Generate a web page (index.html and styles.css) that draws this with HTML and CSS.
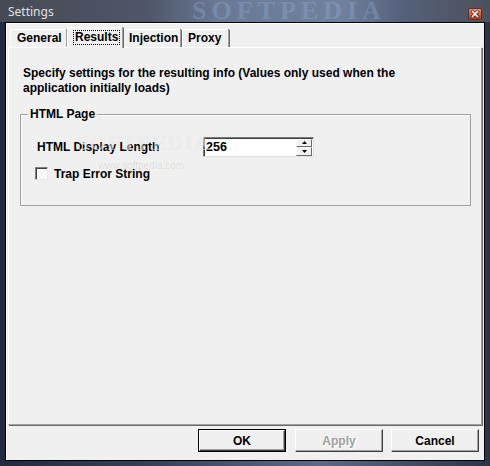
FILE: index.html
```html
<!DOCTYPE html>
<html>
<head>
<meta charset="utf-8">
<link rel="stylesheet" href="styles.css">
</head>
<body>
<div class="window">
  <div class="titlebar">
    <span class="title">Settings</span>
    <span class="wm-title">SOFTPEDIA</span>
    <span class="close">
      <svg width="14" height="12" viewBox="0 0 14 12">
        <path d="M4.5 3.5 L9.5 8.5 M9.5 3.5 L4.5 8.5" stroke="#5a1a10" stroke-width="3" stroke-linecap="square"/>
        <path d="M4.5 3.5 L9.5 8.5 M9.5 3.5 L4.5 8.5" stroke="#ffffff" stroke-width="1.6" stroke-linecap="square"/>
      </svg>
    </span>
  </div>
  <div class="client">
    <div class="tabs">
      <div class="tab tab-general">General</div>
      <div class="tab tab-active"><span class="focus">Results</span></div>
      <div class="tab tab-injection">Injection</div>
      <div class="tab tab-proxy">Proxy</div>
    </div>
    <div class="panel">
      <p class="desc">Specify settings for the resulting info (Values only used when the application initially loads)</p>
      <fieldset class="group">
        <legend>HTML Page</legend>
        <div class="row">
          <span class="label">HTML Display Length</span>
          <div class="spin">
            <span class="spin-value">256</span>
            <div class="spin-btns">
              <span class="spin-btn"><svg width="5" height="3" viewBox="0 0 5 3"><path d="M2.5 0 L5 3 L0 3 Z" fill="#000"/></svg></span>
              <span class="spin-btn"><svg width="5" height="3" viewBox="0 0 5 3"><path d="M0 0 L5 0 L2.5 3 Z" fill="#000"/></svg></span>
            </div>
          </div>
        </div>
        <div class="check">
          <span class="box"></span>
          <span>Trap Error String</span>
        </div>
      </fieldset>
      <span class="wm-mid">SOFTPEDIA</span>
      <span class="wm-url">www.softpedia.com</span>
    </div>
    <div class="buttons">
      <div class="btn btn-default"><span class="btn-inner">OK</span></div>
      <div class="btn btn-disabled"><span class="btn-inner">Apply</span></div>
      <div class="btn"><span class="btn-inner">Cancel</span></div>
    </div>
  </div>
</div>
</body>
</html>
```
FILE: styles.css
```css
* { box-sizing: border-box; margin: 0; padding: 0; }
html, body { width: 490px; height: 466px; overflow: hidden; }
body {
  font-family: "Liberation Sans", Arial, sans-serif;
  font-size: 12px;
  font-weight: bold;
  color: #000;
  background: #2e3548;
}
.window {
  position: relative;
  width: 490px;
  height: 466px;
  display: flex;
  flex-direction: column;
  background: linear-gradient(90deg, #222a40 0%, #34405a 30%, #5a6a88 65%, #2c3448 100%);
}
.titlebar {
  position: relative;
  height: 22px;
  display: flex;
  align-items: flex-start;
  padding: 0 8px;
  background: linear-gradient(90deg, #464a54 0%, #50566a 30%, #6a7a96 45%, #6f819e 70%, #55607a 82%, #4c515c 100%);
  overflow: hidden;
}
.title {
  font-family: "Noto Sans", "DejaVu Sans", sans-serif;
  font-weight: normal;
  font-size: 12px;
  line-height: 16px;
  margin-top: 4px;
  color: #e2e2e2;
}
.wm-title {
  position: absolute;
  left: 192px;
  top: 0;
  font-family: "Liberation Serif", serif;
  font-weight: bold;
  font-size: 26px;
  letter-spacing: 5px;
  color: rgba(150, 175, 215, 0.35);
  line-height: 22px;
}
.close {
  position: relative;
  margin-left: auto;
  margin-top: 8px;
  width: 14px;
  height: 12px;
  border: 1px solid #6a2c20;
  border-radius: 2px;
  background: linear-gradient(180deg, #e49a84 0%, #cf6648 45%, #b53a1e 100%);
  display: flex;
}
.close svg { position: absolute; left: -1px; top: -1px; }
.client {
  flex: 1;
  margin: 0 5px 5px 5px;
  border: 1px solid #000;
  background: #f0f0f0;
  box-shadow: inset 1px 1px 0 #ffffff;
  display: flex;
  flex-direction: column;
}
.tabs {
  height: 24px;
  padding: 4px 0 0 4px;
  display: flex;
  align-items: flex-end;
  position: relative;
  z-index: 2;
}
.tab {
  height: 18px;
  line-height: 17px;
  padding: 0 6px;
  border-top: 1px solid #ffffff;
  border-left: 1px solid #ffffff;
  border-right: 1px solid #a0a0a0;
  box-shadow: 1px 0 0 #696969;
  border-radius: 2px 2px 0 0;
  background: #f0f0f0;
  margin-right: 1px;
}
.tab-general { width: 57px; }
.tab-active {
  width: 56px;
  height: 21px;
  margin-bottom: -1px;
  margin-left: -1px;
  margin-right: 0;
  padding: 2px 0 0 5px;
  line-height: 13px;
  position: relative;
  z-index: 3;
}
.focus {
  display: inline-block;
  padding: 0 1px;
  border: 1px dotted #000;
}
.tab-injection { width: 58px; padding-left: 5px; }
.tab-proxy { width: 47px; padding-left: 5px; }
.panel {
  position: relative;
  height: 378px;
  margin: 0 2px;
  padding: 18px 10px 0 11px;
  border-top: 1px solid #ffffff;
  border-left: 1px solid #ffffff;
  border-right: 1px solid #a0a0a0;
  border-bottom: 1px solid #a0a0a0;
  box-shadow: 1px 1px 0 #696969;
}
.desc {
  padding-left: 3px;
  line-height: 15px;
  width: 390px;
}
.group {
  margin-top: 11px;
  border: 1px solid #a0a0a0;
  box-shadow: inset 1px 1px 0 #fff;
  padding: 0 0 24px 0;
  height: 99px;
}
.group legend {
  margin-left: 7px;
  padding: 0 2px;
  line-height: 15px;
}
.row {
  margin-top: 15px;
  padding-left: 16px;
  display: flex;
  align-items: center;
  height: 20px;
}
.label { width: 166px; }
.spin {
  position: relative;
  width: 111px;
  height: 20px;
  background: #fff;
  border-top: 1px solid #7a7a7a;
  border-left: 1px solid #7a7a7a;
  border-right: 1px solid #e0e0e0;
  border-bottom: 1px solid #e0e0e0;
  box-shadow: inset 1px 1px 0 #404040;
  display: flex;
  align-items: center;
}
.spin-value { padding-left: 2px; font-size: 12.5px; }
.spin-btns {
  margin-left: auto;
  margin-right: 1px;
  width: 16px;
  height: 17px;
  display: flex;
  flex-direction: column;
}
.spin-btn {
  flex: 1;
  background: #f0f0f0;
  border-top: 1px solid #fff;
  border-left: 1px solid #fff;
  border-right: 1px solid #696969;
  border-bottom: 1px solid #696969;
  display: flex;
  align-items: center;
  justify-content: center;
}
.check {
  margin-top: 9px;
  padding-left: 14px;
  display: flex;
  align-items: center;
  height: 15px;
}
.box {
  width: 13px;
  height: 13px;
  margin-right: 6px;
  background: #f8f8f8;
  border-top: 1px solid #808080;
  border-left: 1px solid #808080;
  border-right: 1px solid #e8e8e8;
  border-bottom: 1px solid #e8e8e8;
  box-shadow: inset 1px 1px 0 #404040;
}
.wm-mid {
  position: absolute;
  left: 67px;
  top: 82px;
  font-family: "Liberation Serif", serif;
  font-size: 22px;
  font-weight: bold;
  letter-spacing: 1px;
  color: rgba(255, 255, 255, 0.55);
  text-shadow: 0 0 1px rgba(0, 0, 0, 0.1);
  pointer-events: none;
}
.wm-url {
  position: absolute;
  left: 89px;
  top: 112px;
  font-family: "Liberation Sans", sans-serif;
  font-size: 10px;
  font-weight: normal;
  color: rgba(0, 0, 0, 0.1);
  pointer-events: none;
}
.buttons {
  display: flex;
  justify-content: flex-end;
  gap: 8px;
  padding: 4px 5px 0 0;
}
.btn {
  width: 88px;
  height: 23px;
  display: flex;
}
.btn-inner {
  flex: 1;
  display: flex;
  align-items: center;
  justify-content: center;
  border-top: 1px solid #ffffff;
  border-left: 1px solid #ffffff;
  border-right: 1px solid #404040;
  border-bottom: 1px solid #404040;
  box-shadow: inset -1px -1px 0 #a0a0a0;
  background: #f0f0f0;
}
.btn-default { border: 1px solid #000; }
.btn-disabled { margin-left: 1px; }
.btn-disabled .btn-inner {
  color: #a0a0a0;
  text-shadow: 1px 1px 0 #ffffff;
}
```
